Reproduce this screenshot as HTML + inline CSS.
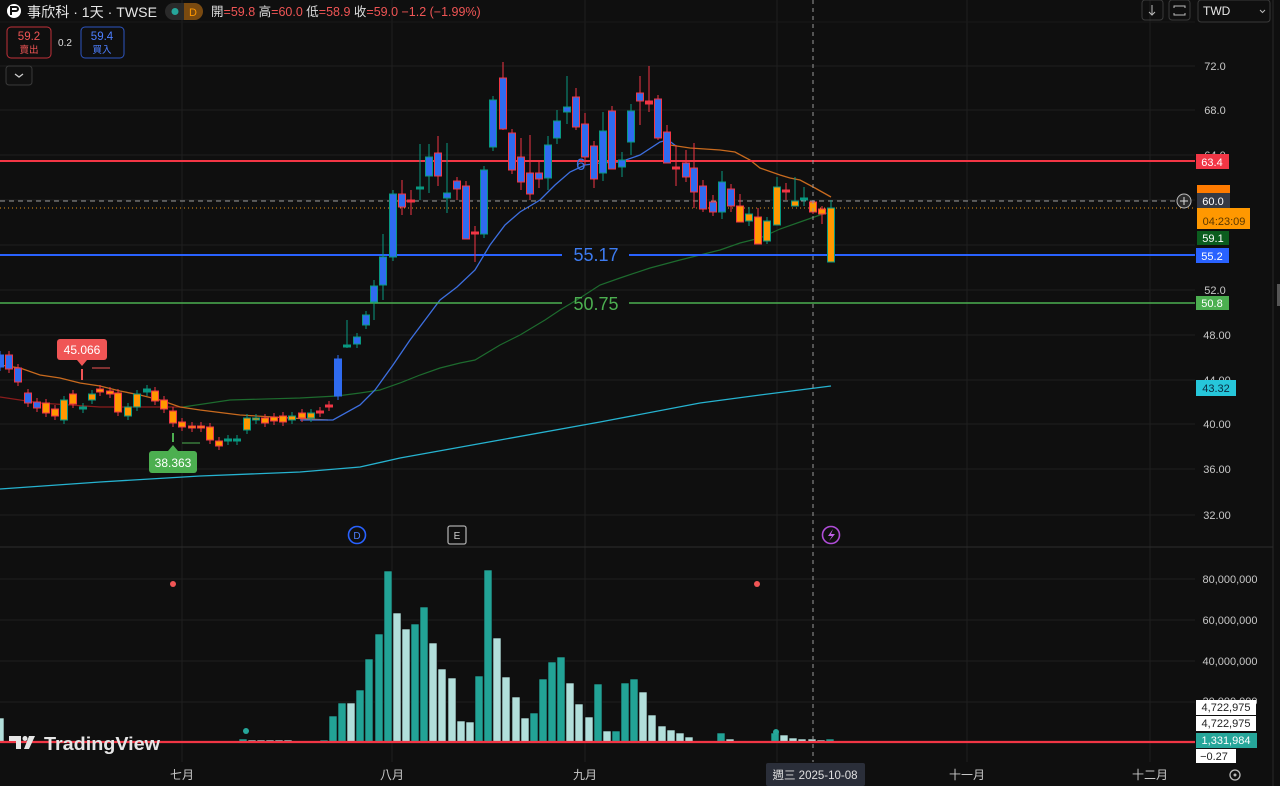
<!DOCTYPE html>
<html><head><meta charset="utf-8"><style>
html,body{margin:0;padding:0;background:#0f0f0f;width:1280px;height:786px;overflow:hidden;font-family:"Liberation Sans","Noto Sans CJK TC",sans-serif;}
svg text{font-family:"Liberation Sans","Noto Sans CJK TC",sans-serif;}
</style></head><body>
<svg id="s" width="1280" height="786" xmlns="http://www.w3.org/2000/svg">
<rect width="1280" height="786" fill="#0f0f0f"/>
<g stroke="#1f1f1f" stroke-width="1">
<line x1="0" y1="66" x2="1195" y2="66"/><line x1="0" y1="110" x2="1195" y2="110"/><line x1="0" y1="155" x2="1195" y2="155"/><line x1="0" y1="200" x2="1195" y2="200"/><line x1="0" y1="245" x2="1195" y2="245"/><line x1="0" y1="290" x2="1195" y2="290"/><line x1="0" y1="335" x2="1195" y2="335"/><line x1="0" y1="380" x2="1195" y2="380"/><line x1="0" y1="424" x2="1195" y2="424"/><line x1="0" y1="469" x2="1195" y2="469"/><line x1="0" y1="515" x2="1195" y2="515"/>
<line x1="0" y1="579" x2="1195" y2="579"/><line x1="0" y1="620" x2="1195" y2="620"/><line x1="0" y1="661" x2="1195" y2="661"/><line x1="0" y1="702" x2="1195" y2="702"/>
<line x1="182" y1="0" x2="182" y2="762"/><line x1="392" y1="0" x2="392" y2="762"/><line x1="585" y1="0" x2="585" y2="762"/><line x1="777" y1="0" x2="777" y2="762"/><line x1="967" y1="0" x2="967" y2="762"/><line x1="1150" y1="0" x2="1150" y2="762"/>
</g>
<line x1="0" y1="547" x2="1273" y2="547" stroke="#2e2e2e"/>
<line x1="0" y1="22" x2="1195" y2="22" stroke="#1a1a1a"/>
<line x1="1273" y1="0" x2="1273" y2="786" stroke="#2a2a2a"/>
<rect x="1277" y="284" width="3" height="22" fill="#555"/>
<polyline fill="none" stroke="#26b3d0" stroke-width="1.3" points="0,489 100,482 200,476 300,472 360,467 400,458 500,440 600,422 700,403 760,395 831,386"/>
<polyline fill="none" stroke="#8b1c1c" stroke-width="1.3" points="0,397 40,403 70,405 100,407 140,407 183,407"/>
<polyline fill="none" stroke="#1d6b2e" stroke-width="1.2" points="183,407 230,400 300,398 337,396 360,393 380,390 400,383 420,375 440,368 460,363 475,360 500,345 520,335 545,320 560,310 580,298 600,285 620,278 650,268 680,260 700,255 720,250 740,243 760,238 780,229 800,222 820,215 831,212"/>
<polyline fill="none" stroke="#c86a1e" stroke-width="1.3" points="0,365 20,368 40,375 60,378 80,383 100,386 120,391 140,395 160,400 180,407 200,410 240,415 290,418 328,420"/>
<polyline fill="none" stroke="#3d6fe0" stroke-width="1.3" points="300,420 333,420 360,405 375,390 393,365 410,340 425,320 440,300 457,287 475,270 490,245 505,225 520,212 540,200 555,185 570,172 585,165 600,163 620,162 640,155 660,142 668,140 676,146"/>
<polyline fill="none" stroke="#c86a1e" stroke-width="1.3" points="670,145 690,148 720,150 735,152 750,160 760,168 780,175 790,178 800,180 815,188 831,197"/>
<line x1="0" y1="161" x2="1195" y2="161" stroke="#f23645" stroke-width="2"/>
<text x="576" y="170" fill="#3d6fe0" font-size="17">6</text>
<line x1="0" y1="255" x2="562" y2="255" stroke="#2962ff" stroke-width="2"/><line x1="629" y1="255" x2="1195" y2="255" stroke="#2962ff" stroke-width="2"/>
<text x="596" y="261" fill="#3d7bf0" font-size="18" text-anchor="middle">55.17</text>
<line x1="0" y1="303" x2="562" y2="303" stroke="#4caf50" stroke-width="1.6"/><line x1="629" y1="303" x2="1195" y2="303" stroke="#4caf50" stroke-width="1.6"/>
<text x="596" y="310" fill="#4caf50" font-size="18" text-anchor="middle">50.75</text>
<line x1="0" y1="201" x2="1180" y2="201" stroke="#9a9a9a" stroke-dasharray="5,4"/>
<line x1="0" y1="208" x2="1195" y2="208" stroke="#e69518" stroke-dasharray="1,3"/>
<g id="candles"></g>
<g id="vols"></g>
<line x1="0" y1="742" x2="1195" y2="742" stroke="#f23645" stroke-width="2.2"/>
<line x1="813" y1="0" x2="813" y2="762" stroke="#9a9a9a" stroke-dasharray="4,4"/>
<circle cx="173" cy="584" r="3" fill="#f05555"/><circle cx="757" cy="584" r="3" fill="#f05555"/><circle cx="246" cy="731" r="3" fill="#26a69a"/><circle cx="776" cy="732" r="3" fill="#26a69a"/>
<rect x="57" y="339" width="50" height="21" rx="3" fill="#f05555"/><path d="M77 360 L82 366 L87 360Z" fill="#f05555"/>
<text x="82" y="354" fill="#fff" font-size="12" text-anchor="middle">45.066</text>
<line x1="82" y1="369" x2="82" y2="380" stroke="#f05555" stroke-width="2"/><line x1="92" y1="368" x2="110" y2="368" stroke="#f05555"/>
<rect x="149" y="451" width="48" height="22" rx="3" fill="#4caf50"/><path d="M168 451 L173 445 L178 451Z" fill="#4caf50"/>
<text x="173" y="467" fill="#fff" font-size="12" text-anchor="middle">38.363</text>
<line x1="173" y1="433" x2="173" y2="442" stroke="#4caf50" stroke-width="2"/><line x1="182" y1="443" x2="200" y2="443" stroke="#4caf50"/>
<circle cx="357" cy="535" r="8.5" fill="none" stroke="#2962ff" stroke-width="1.6"/><text x="357" y="539" fill="#4d7fff" font-size="10" text-anchor="middle">D</text>
<rect x="448" y="526" width="18" height="18" rx="2" fill="none" stroke="#aaa" stroke-width="1.3"/><text x="457" y="539" fill="#ccc" font-size="10" text-anchor="middle">E</text>
<circle cx="831" cy="535" r="8.5" fill="none" stroke="#b04dd8" stroke-width="1.6"/><path d="M833 529 L828 536 L832 536 L829 541 L835 534 L831 534Z" fill="#c060e8"/>
<g fill="#c8c8c8" font-size="11" text-anchor="middle">
<text x="1215" y="70">72.0</text><text x="1215" y="114">68.0</text><text x="1215" y="159">64.0</text><text x="1215" y="294">52.0</text><text x="1217" y="339">48.00</text><text x="1217" y="384">44.00</text><text x="1217" y="428">40.00</text><text x="1217" y="473">36.00</text><text x="1217" y="519">32.00</text>
<text x="1230" y="583">80,000,000</text><text x="1230" y="624">60,000,000</text><text x="1230" y="665">40,000,000</text><text x="1230" y="705">20,000,000</text>
</g>
<rect x="1196" y="154" width="33" height="15" fill="#f23645"/><text x="1212" y="166" fill="#fff" font-size="11" text-anchor="middle">63.4</text>
<rect x="1197" y="185" width="33" height="10" fill="#ff7b00"/>
<circle cx="1184" cy="201" r="7" fill="#2a2a2a" stroke="#bbb"/><path d="M1180 201h8M1184 197v8" stroke="#ddd"/>
<rect x="1197" y="193" width="33" height="15" fill="#363a45"/><text x="1213" y="205" fill="#fff" font-size="11" text-anchor="middle">60.0</text>
<rect x="1197" y="208" width="53" height="21" fill="#ff9800"/><text x="1224" y="225" fill="#5a3800" font-size="11" text-anchor="middle">04:23:09</text>
<rect x="1197" y="231" width="32" height="14" fill="#0b5d1e"/><text x="1213" y="242" fill="#fff" font-size="11" text-anchor="middle">59.1</text>
<rect x="1196" y="248" width="33" height="15" fill="#2962ff"/><text x="1212" y="260" fill="#fff" font-size="11" text-anchor="middle">55.2</text>
<rect x="1196" y="296" width="33" height="14" fill="#4caf50"/><text x="1212" y="307" fill="#fff" font-size="11" text-anchor="middle">50.8</text>
<rect x="1196" y="380" width="40" height="16" fill="#26c6da"/><text x="1216" y="392" fill="#0b2a40" font-size="11" text-anchor="middle">43.32</text>
<rect x="1196" y="700" width="60" height="15" fill="#fff"/><text x="1226" y="711" fill="#222" font-size="11" text-anchor="middle">4,722,975</text>
<rect x="1196" y="716" width="60" height="15" fill="#fff"/><text x="1226" y="727" fill="#222" font-size="11" text-anchor="middle">4,722,975</text>
<rect x="1196" y="733" width="61" height="15" fill="#26a69a"/><text x="1226" y="744" fill="#fff" font-size="11" text-anchor="middle">1,331,984</text>
<rect x="1196" y="749" width="40" height="14" fill="#fff"/><text x="1214" y="760" fill="#222" font-size="11" text-anchor="middle">−0.27</text>
<g fill="#c8c8c8" font-size="12" text-anchor="middle">
<text x="182" y="779">七月</text><text x="392" y="779">八月</text><text x="585" y="779">九月</text><text x="967" y="779">十一月</text><text x="1150" y="779">十二月</text></g>
<rect x="766" y="763" width="99" height="23" rx="2" fill="#2a2e39"/><text x="815" y="779" fill="#e0e0e0" font-size="11.5" text-anchor="middle">週三 2025-10-08</text>
<circle cx="1235" cy="775" r="5" fill="none" stroke="#bbb" stroke-width="1.3"/><circle cx="1235" cy="775" r="1.5" fill="#bbb"/>
<g fill="#e6e6e6"><path d="M9 736h12v13h-5v-8h-7z"/><circle cx="25" cy="738.5" r="2.5"/><path d="M29 736h6l-6 13h-5z"/></g>
<text x="44" y="750" fill="#e6e6e6" font-size="18" font-weight="bold" textLength="116" lengthAdjust="spacingAndGlyphs">TradingView</text>
<circle cx="14" cy="11" r="7" fill="#fff"/><path d="M10 11h6a2 2 0 0 0 0-4h-5v8" fill="none" stroke="#111" stroke-width="2"/>
<text x="27" y="17" fill="#e6e6e6" font-size="14" textLength="130" lengthAdjust="spacingAndGlyphs">事欣科 · 1天 · TWSE</text>
<rect x="165" y="3" width="38" height="17" rx="8.5" fill="#2a2a2a"/><rect x="184" y="3" width="19" height="17" rx="8.5" fill="#7a4a10"/><rect x="184" y="3" width="8" height="17" fill="#7a4a10"/>
<circle cx="175" cy="11.5" r="3.5" fill="#26a69a"/><text x="193" y="16" fill="#ff9800" font-size="11" text-anchor="middle">D</text>
<text x="211" y="16" font-size="12.5" fill="#ddd">開<tspan fill="#f05555">=59.8</tspan> 高<tspan fill="#f05555">=60.0</tspan> 低<tspan fill="#f05555">=58.9</tspan> 收<tspan fill="#f05555">=59.0 −1.2 (−1.99%)</tspan></text>
<rect x="7" y="27" width="44" height="31" rx="4" fill="none" stroke="#c0303a"/><text x="29" y="40" fill="#f05555" font-size="11.5" text-anchor="middle">59.2</text><text x="29" y="53" fill="#f05555" font-size="9.5" text-anchor="middle">賣出</text>
<text x="65" y="46" fill="#ddd" font-size="10" text-anchor="middle">0.2</text>
<rect x="81" y="27" width="43" height="31" rx="4" fill="none" stroke="#2d55c0"/><text x="102" y="40" fill="#4d7fff" font-size="11.5" text-anchor="middle">59.4</text><text x="102" y="53" fill="#4d7fff" font-size="9.5" text-anchor="middle">買入</text>
<rect x="6" y="66" width="26" height="19" rx="3" fill="#111" stroke="#3a3a3a"/><path d="M15 74l4 3 4-3" fill="none" stroke="#ccc" stroke-width="1.3"/>
<rect x="1142" y="0" width="21" height="20" rx="3" fill="none" stroke="#3a3a3a"/><path d="M1152 5v10M1149 12l3 3 3-3" fill="none" stroke="#bbb"/>
<rect x="1169" y="0" width="21" height="20" rx="3" fill="none" stroke="#3a3a3a"/><path d="M1174 8v-2h11v2M1174 13v2h11v-2" fill="none" stroke="#bbb"/>
<rect x="1198" y="0" width="72" height="22" rx="3" fill="none" stroke="#3a3a3a"/><text x="1203" y="15" fill="#e6e6e6" font-size="12">TWD</text><path d="M1260 10l2.5 2.5 2.5-2.5" fill="none" stroke="#bbb"/>
</svg>
<script>
var C={b:"#2f6bf0",o:"#ff9800",r:"#f23645",g:"#089981"};
var d=[
[0,355,367,'b','b'],[9,355,369,'b','r'],[18,368,382,'b','r'],[28,393,403,'b','r'],[37,402,408,'b','r'],[46,403,413,'o','r'],[55,409,416,'o','r'],[64,400,420,'o','g'],[73,394,404,'o','r'],[83,407,409,'g','g'],[92,394,400,'o','g'],[100,389,392,'o','r'],[110,391,394,'o','r'],[118,393,412,'o','r'],[128,407,416,'o','g'],[137,394,407,'o','g'],[147,389,392,'g','g'],[155,391,401,'o','r'],[164,400,409,'o','r'],[173,411,423,'o','r'],[182,422,427,'o','r'],[192,426,428,'o','r'],[201,426,428,'o','r'],[210,427,440,'o','r'],[219,441,446,'o','r'],[228,439,441,'g','g'],[237,439,441,'g','g'],[247,418,430,'o','g'],[256,418,420,'o','g'],[265,418,423,'o','r'],[274,417,421,'o','r'],[283,416,422,'o','r'],[292,416,420,'o','g'],[302,413,418,'o','r'],[311,413,418,'o','g'],[320,411,413,'r','r'],[329,405,407,'r','r'],
[338,359,396,'b','b'],[347,345,347,'g','g',320,348],[357,337,344,'b','g'],[366,315,325,'b','g'],[374,286,302,'b','g',280,320],[383,257,285,'b','g',234,300],[393,194,257,'b','g'],[402,194,207,'b','r',180,215],[411,200,202,'r','r',190,215],[420,187,189,'g','g',144,200],[429,157,176,'b','g',144,193],[438,153,176,'b','r',136,186],[447,193,198,'b','g',143,213],[457,181,189,'b','r',177,200],[466,186,239,'b','r',181,239],[475,232,234,'r','r',226,262],[484,170,234,'b','g'],[493,100,147,'b','g'],[503,78,129,'b','r',62,130],[512,133,170,'b','r'],[521,157,182,'b','r',138,190],[530,173,194,'b','r',135,200],[539,173,179,'b','r',162,188],[548,145,178,'b','g',136,190],[557,121,138,'b','g',110,144],[567,107,112,'b','g',76,124],[576,97,127,'b','r',88,130],[585,124,157,'b','r',113,165],[594,146,179,'b','r',141,188],[603,131,173,'b','g',112,181],[612,111,169,'b','r',106,169],[622,160,167,'b','g',152,177],[631,111,142,'b','g',104,155],[640,93,101,'b','r',76,125],[649,101,104,'r','r',66,112],[658,99,138,'b','r',95,140],[667,132,163,'b','r',125,163],[676,167,169,'r','r',145,186],
[686,163,177,'b','r',150,182],[694,168,192,'b','r',143,208],[703,186,209,'b','r',180,212],[713,202,212,'b','r',195,216],[722,182,212,'b','g',171,219],[731,189,206,'b','r',184,212],[740,206,222,'o','r',194,222],[749,214,221,'o','g',207,226],[758,217,244,'o','r',208,244],[767,221,241,'o','g',217,244],[777,187,225,'o','g',177,225],[786,190,192,'r','r',183,200],[795,201,206,'o','g',177,206],[804,198,200,'g','g',187,206],[813,202,212,'o','r',200,214],[822,209,214,'o','r',206,224],[831,208,262,'o','g',200,262]];
var h='';d.forEach(function(c){var x=c[0],t=c[1],b=c[2],wt=c[5]||t-4,wb=c[6]||b+4;
h+='<line x1="'+x+'" y1="'+wt+'" x2="'+x+'" y2="'+wb+'" stroke="'+C[c[4]]+'"/>';
var hh=Math.max(b-t,2);h+='<rect x="'+(x-3.5)+'" y="'+t+'" width="7" height="'+hh+'" fill="'+C[c[3]]+'" stroke="'+C[c[4]]+'"/>';});
document.getElementById('candles').innerHTML=h;
var v=[[0,718,'l'],[243,739,'d'],[252,740,'l'],[261,740,'l'],[270,740,'l'],[279,740,'l'],[288,740,'l'],[324,740,'d'],[333,716,'d'],[342,703,'d'],[351,703,'l'],[360,690,'d'],[369,659,'d'],[379,634,'d'],[388,571,'d'],[397,613,'l'],[406,629,'l'],[415,624,'d'],[424,607,'d'],[433,643,'l'],[442,669,'l'],[452,678,'l'],[461,721,'l'],[470,722,'l'],[479,676,'d'],[488,570,'d'],[497,638,'l'],[506,677,'l'],[516,697,'l'],[525,718,'l'],[534,713,'d'],[543,679,'d'],[552,662,'d'],[561,657,'d'],[570,683,'l'],[579,704,'l'],[589,717,'l'],[598,684,'d'],[607,731,'l'],[616,731,'d'],[625,683,'d'],[634,679,'d'],[643,692,'l'],[652,715,'l'],[662,726,'l'],[671,730,'l'],[680,733,'l'],[689,737,'l'],[721,733,'d'],[730,739,'l'],[751,741,'d'],[775,733,'d'],[784,735,'l'],[793,738,'l'],[802,739,'l'],[812,739,'l'],[821,740,'l'],[830,739,'d']];
var g='';v.forEach(function(b){g+='<rect x="'+(b[0]-4)+'" y="'+b[1]+'" width="8" height="'+(742-b[1])+'" fill="'+(b[2]=='d'?'#22a396':'#b2dfdb')+'" stroke="#0f0f0f" stroke-width="0.6"/>';});
document.getElementById('vols').innerHTML=g;
</script>
</body></html>
